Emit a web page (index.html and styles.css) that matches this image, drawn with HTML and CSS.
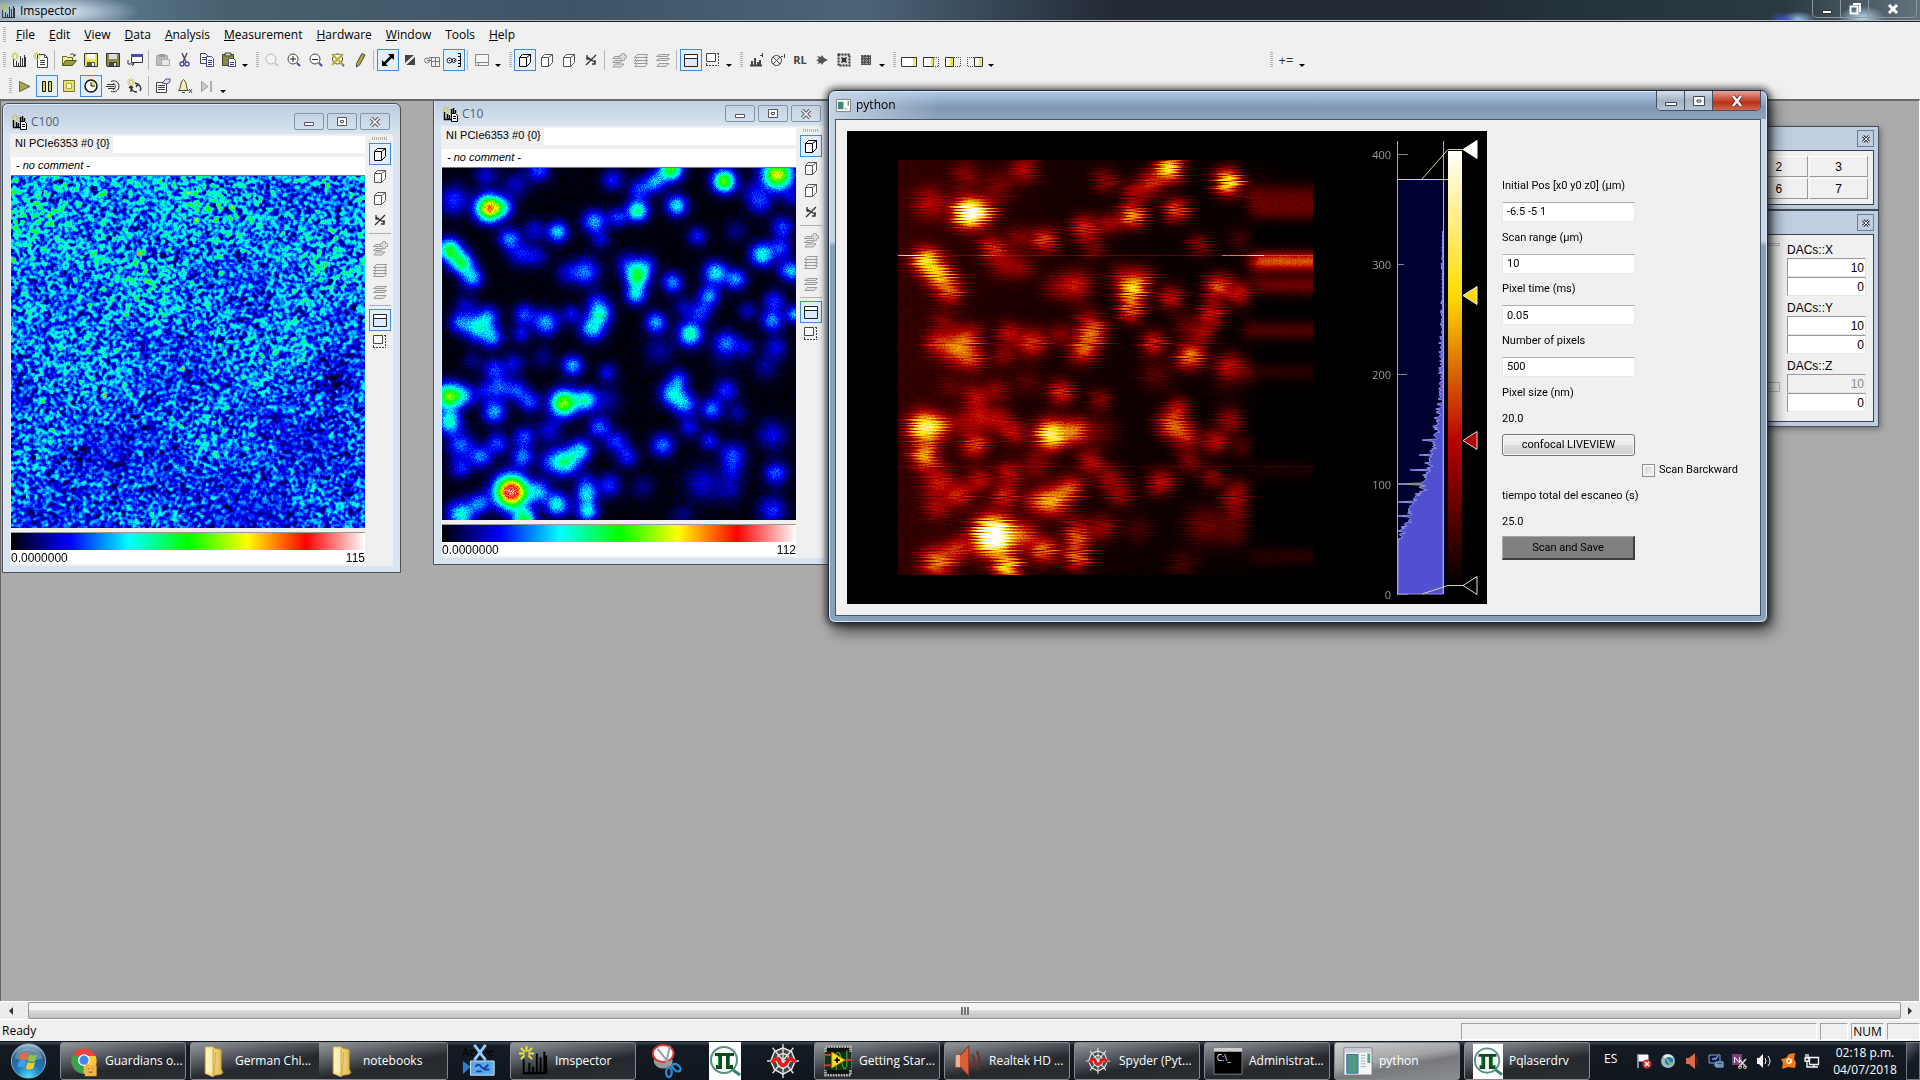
FILE: index.html
```html
<!DOCTYPE html>
<html lang="en">
<head>
<meta charset="utf-8">
<title>Imspector</title>
<link rel="stylesheet" href="styles.css">
</head>
<body>
<svg class="defs" aria-hidden="true">
<defs>
<linearGradient id="g-gold" x1="0" x2="1"><stop offset="0" stop-color="#fff3b0"/><stop offset="1" stop-color="#e0b64a"/></linearGradient>
<linearGradient id="g-thermal" x1="0" y1="1" x2="0" y2="0"><stop offset="0" stop-color="#000"/><stop offset=".3333" stop-color="#b90000"/><stop offset=".6666" stop-color="#ffdc00"/><stop offset="1" stop-color="#fff"/></linearGradient>
<radialGradient id="g-orb" cx=".5" cy=".95" r=".95"><stop offset="0" stop-color="#4fe0ff"/><stop offset=".4" stop-color="#1b78b8"/><stop offset=".75" stop-color="#2c5f88"/><stop offset="1" stop-color="#b9cfe0"/></radialGradient>
</defs>
<symbol id="star" viewBox="0 0 16 16"><path d="M4 0v3M4 6v2M0 4h3M5 4h3M1 1l2 2M5 5l2 2M7 1L5 3M3 5L1 7" stroke="#c5c02c" fill="none"/></symbol>
<symbol id="new" viewBox="0 0 16 16"><path d="M2.500 7v7.500H15M5.500 14V9M7.500 14v-3M9.500 14V4M11.500 14V6M13.500 14V3M14.500 14V5" stroke="#333" fill="none"/><use href="#star" width="16" height="16"/></symbol>
<symbol id="child" viewBox="0 0 16 16"><path d="M2.500 6v7.500H9M5.500 13V8M7.500 13V9M9.500 8V3M11.500 7V2M13.500 7V4" stroke="#000" stroke-width="1.500" fill="none"/><path d="M9.500 7.500h4l2 2v6h-6z" fill="#fff" stroke="#000"/><path d="M11 10.500h3M11 12.500h3" stroke="#000"/><use href="#star" width="16" height="16"/></symbol>
<symbol id="newdoc" viewBox="0 0 16 16"><path d="M4.500 2.500h7l3 3v10h-10z" fill="#fff" stroke="#444"/><path d="M11.500 2.500v3h3M7 8.500h5M7 10.500h5M7 12.500h5" stroke="#444" fill="none"/><use href="#star" width="16" height="16"/></symbol>
<symbol id="open" viewBox="0 0 16 16"><path d="M1.500 13V4.500h4l1 1h5v3" fill="#f2ee9a" stroke="#66661a"/><path d="M1.500 13.500l3-5h11l-4 5z" fill="#9a9a3c" stroke="#55551a"/><path d="M9 3c2-2 4-1 5 1m0-2v2h-2" stroke="#333" fill="none"/></symbol>
<symbol id="save" viewBox="0 0 16 16"><path d="M1.500 1.500h13v13h-12l-1-1z" fill="#e6e25a" stroke="#333"/><path d="M4 2h8v5H4z" fill="#fff"/><path d="M4 10h8v4H4z" fill="#555"/><path d="M9 11h2v3H9z" fill="#fff"/></symbol>
<symbol id="saveas" viewBox="0 0 16 16"><path d="M1.500 1.500h13v13h-12l-1-1z" fill="#8b8b45" stroke="#333"/><path d="M4 2h8v5H4z" fill="#ddd"/><path d="M4 10h8v4H4z" fill="#444"/><path d="M9 11h2v3H9z" fill="#ddd"/></symbol>
<symbol id="win" viewBox="0 0 16 16"><path d="M4.500 2.500h11v8h-11z" fill="#fff" stroke="#333"/><path d="M4 2h12v3H4z" fill="#4a4aa5"/><path d="M1 8v4h6M5 10l2 2-2 2" stroke="#333" fill="none"/></symbol>
<symbol id="clip" viewBox="0 0 16 16"><path d="M1.500 3.500h11v10h-11z" fill="#bbb" stroke="#aaa"/><path d="M4 2h6v3H4z" fill="#999"/><path d="M6.500 7.500h8v6h-8z" fill="#e8e8e8" stroke="#aaa"/></symbol>
<symbol id="cut" viewBox="0 0 16 16"><path d="M5 1l4 9M10 1L6 10" stroke="#444" stroke-width="1.300" fill="none"/><circle cx="5" cy="12" r="2" fill="none" stroke="#4646a8" stroke-width="1.300"/><circle cx="10" cy="12" r="2" fill="none" stroke="#4646a8" stroke-width="1.300"/></symbol>
<symbol id="copy" viewBox="0 0 16 16"><path d="M1.500 1.500h5l2 2v8h-7z" fill="#fff" stroke="#444"/><path d="M3 5.500h4M3 7.500h4" stroke="#444"/><path d="M7.500 4.500h5l2 2v8h-7z" fill="#fff" stroke="#4646a8"/><path d="M9 8.500h4M9 10.500h4M9 12.500h4" stroke="#4646a8"/></symbol>
<symbol id="paste" viewBox="0 0 16 16"><path d="M1.500 2.500h11v11h-11z" fill="#8b8b3a" stroke="#44441a"/><path d="M4 1h6v3H4z" fill="#ccc" stroke="#444"/><path d="M7.500 6.500h5l2 2v6h-7z" fill="#fff" stroke="#4646a8"/><path d="M9 10.500h4M9 12.500h4" stroke="#4646a8"/></symbol>
<symbol id="lens" viewBox="0 0 16 16"><circle cx="7" cy="7" r="5" fill="#f4f4f4" stroke="currentColor"/><path d="M11 11l3 3" stroke="currentColor" stroke-width="1.500"/></symbol>
<symbol id="zin" viewBox="0 0 16 16"><path d="M11 11l3 3" stroke="#4646a8" stroke-width="2"/><circle cx="7" cy="7" r="5" fill="#fff" stroke="#444"/><path d="M4 7h6M7 4v6" stroke="#222"/></symbol>
<symbol id="zout" viewBox="0 0 16 16"><path d="M11 11l3 3" stroke="#4646a8" stroke-width="2"/><circle cx="7" cy="7" r="5" fill="#fff" stroke="#444"/><path d="M4 7.500h6" stroke="#222"/></symbol>
<symbol id="zx" viewBox="0 0 16 16"><path d="M11 11l3 3" stroke="#4646a8" stroke-width="2"/><circle cx="7.500" cy="7" r="5" fill="#fff" stroke="#444"/><path d="M2 2l11 11M13 2L2 13" stroke="#b8b12a" stroke-width="2"/></symbol>
<symbol id="pen" viewBox="0 0 16 16"><path d="M10 1.500l3 1.500-5.500 10-3 2 0-3.500z" fill="#b0ac3a" stroke="#444"/></symbol>
<symbol id="arrows" viewBox="0 0 16 16"><path d="M4 12L12 4" stroke="#000" stroke-width="2.500"/><path d="M8 2h6v6zM2 8v6h6z"/></symbol>
<symbol id="diag" viewBox="0 0 16 16"><path d="M3 3h9L3 11z" fill="#444"/><path d="M13 5v8H4z" fill="#444"/><path d="M4 12l8-8" stroke="#eee" stroke-width="1.500"/></symbol>
<symbol id="link" viewBox="0 0 16 16"><path d="M7.500 5.500h8v9h-8zM7.500 9.500h8M11.500 5.500v9" fill="none" stroke="#777"/><circle cx="3" cy="8.500" r="2.500" fill="none" stroke="#777"/><path d="M3 8.500h4M5 5.500h3" stroke="#777"/></symbol>
<symbol id="linkb" viewBox="0 0 16 16"><circle cx="3.500" cy="8.500" r="2.500" fill="none" stroke="#222"/><circle cx="8" cy="8.500" r="2" fill="none" stroke="#222"/><path d="M3 8.500h1M8 8.500h1M12 1.500h2.500v13H12M12 4.500h2M12 8.500h2M12 11.500h2" fill="none" stroke="#000"/></symbol>
<symbol id="pane" viewBox="0 0 16 16"><path d="M1.500 2.500h13v11h-13zM1.500 10.500h13M4.500 10v3" fill="#f4f4f4" stroke="#888"/></symbol>
<symbol id="cube" viewBox="0 0 16 16"><path d="M2.500 5.500h7v9h-7zM2.500 5.500l3-3h8v8l-4 4M9.500 5.500l4-3" fill="#fff" stroke="currentColor"/></symbol>
<symbol id="axes" viewBox="0 0 16 16"><path d="M3 13L13 3M4 5l9 6M4 3v4h3M12 8v4h-3" fill="none" stroke="#333" stroke-width="1.300"/></symbol>
<symbol id="lay1" viewBox="0 0 16 16"><path d="M3.500 4.500h8l-2 2h-8zM3.500 8.500h8l-2 2h-8zM4 12h9l-3 3H2z" fill="#e4e4e4" stroke="#999"/><path d="M10.500 1.500h3v2h2v3h-2v2h-3v-2h-2v-3h2z" fill="#ddd" stroke="#aaa"/></symbol>
<symbol id="lay2" viewBox="0 0 16 16"><path d="M4.500 2.500h10l-2 3h-11zM4.500 5.500h10l-2 3h-11zM4.500 8.500h10l-2 3h-11zM4.500 11.500h10l-2 3h-11z" fill="#eee" stroke="#999"/></symbol>
<symbol id="lay3" viewBox="0 0 16 16"><path d="M4.500 2.500h10l-2 2h-11zM4.500 6.500h10l-2 2h-11zM4 11.500h10l-3 3H2z" fill="#e4e4e4" stroke="#999"/></symbol>
<symbol id="frame" viewBox="0 0 16 16"><path d="M1.500 2.500h13v12h-13z" fill="#dcebfa" stroke="#222"/><path d="M2 3h12v3H2z" fill="#fff"/><path d="M1 6.500h13" stroke="#222"/></symbol>
<symbol id="dash" viewBox="0 0 16 16"><path d="M1.500 1.500h9v8h-9z" fill="#fff" stroke="#444"/><path d="M13.500 1v13M1 13.500h13M1.500 11v3M12 1.500h2" stroke="#444" stroke-dasharray="2 1" fill="none"/></symbol>
<symbol id="chart" viewBox="0 0 16 16"><path d="M2 13.500h12M4 13V9M7 13V6M10 13v-3M12 13V8" stroke="#444" stroke-width="2"/><path d="M12 3.500h2M14.500 1v4" stroke="#444"/></symbol>
<symbol id="circx" viewBox="0 0 16 16"><circle cx="6.500" cy="8.500" r="5" fill="none" stroke="#444"/><path d="M3 5l7 7M10 5l-7 7M11 4.500h2M14.500 2v4" stroke="#444"/></symbol>
<symbol id="burst" viewBox="0 0 16 16"><path d="M3 4l4 1 1-2 2 3 4 2-4 2-2 3-1-2-4 1 2-2-3-2 3-1z" fill="#555"/></symbol>
<symbol id="fburst" viewBox="0 0 16 16"><path d="M2.500 2.500h11v11h-11z" fill="#ddd" stroke="#333" stroke-width="2" stroke-dasharray="2 1"/><path d="M5 5l3 1 3-1-1 3 1 3-3-1-3 1 1-3z" fill="#333"/></symbol>
<symbol id="grid" viewBox="0 0 16 16"><path d="M3 3h10v10H3z" fill="#555"/><path d="M5.500 3v10M8.500 3v10M11.500 3v10M3 5.500h10M3 8.500h10M3 11.500h10" stroke="#999" stroke-dasharray="1 1"/></symbol>
<symbol id="box1" viewBox="0 0 16 16"><path d="M.5 5.500h15v9H.5z" fill="#fff" stroke="#333"/><path d="M12 6h2.500v8H12z" fill="#ece64a"/></symbol>
<symbol id="box2" viewBox="0 0 16 16"><path d="M.5 5.500h10v9H.5z" fill="#fff" stroke="#333"/><path d="M8 6h2.500v8H8z" fill="#ece64a"/><path d="M11 5.500h4.500v9H11" fill="none" stroke="#444" stroke-dasharray="1 1"/></symbol>
<symbol id="box3" viewBox="0 0 16 16"><path d="M.5 5.500h8v9H.5z" fill="#fff" stroke="#333"/><path d="M5 6h3v8H5z" fill="#ece64a"/><path d="M9 5.500h6.500v9H9" fill="none" stroke="#444" stroke-dasharray="1 1"/></symbol>
<symbol id="box4" viewBox="0 0 16 16"><path d="M7.500 5.500h8v9h-8z" fill="#fff" stroke="#333"/><path d="M12 6h2.500v8H12z" fill="#ece64a"/><path d="M7 5.500H.5v9H7" fill="none" stroke="#444" stroke-dasharray="1 1"/></symbol>
<symbol id="play" viewBox="0 0 16 16"><path d="M2.500 3.500v10L13 8.500z" fill="#aaa64a" stroke="#66663a"/></symbol>
<symbol id="pause" viewBox="0 0 16 16"><path d="M3.500 3.500h3v10h-3zM9.500 3.500h3v10h-3z" fill="#d8d33a" stroke="#111"/></symbol>
<symbol id="stop" viewBox="0 0 16 16"><path d="M2.500 2.500h11v11h-11z" fill="#e8e26a" stroke="#77773a"/><path d="M5.500 5.500h5v5h-5z" fill="#fafad8" stroke="#aaa64a"/></symbol>
<symbol id="clock" viewBox="0 0 16 16"><circle cx="8" cy="8" r="6" fill="#fff" stroke="#111" stroke-width="1.500"/><path d="M8.500 3v4.500H12A4 4 0 0 0 8.500 3z" fill="#e8e26a"/><path d="M8 4v4h4" fill="none" stroke="#111"/></symbol>
<symbol id="loop" viewBox="0 0 16 16"><path d="M6 3.500c5-2 8 1 8 5s-4 6-8 5M2 6.500h7M1 8.500h8M3 10.500h7" fill="none" stroke="#333"/><path d="M8 5.500c3 0 3 6 0 6" fill="none" stroke="#333"/></symbol>
<symbol id="redo" viewBox="0 0 16 16"><path d="M4 8c0 5 4 6 6 6M13 13c2-3 0-6-3-7M4 14V9M2 10l2-2 2 2M8 5l3 1-2 3" fill="none" stroke="#333" stroke-width="1.400"/><use href="#star" width="16" height="16"/></symbol>
<symbol id="prop" viewBox="0 0 16 16"><path d="M1.500 4.500h10v10h-10z" fill="#fff" stroke="#444"/><path d="M3 7.500h7M3 9.500h7M3 11.500h7" stroke="#444"/><path d="M7 5l4-4h4v3l-3 2z" fill="#ddd" stroke="#4646a8"/></symbol>
<symbol id="bell" viewBox="0 0 16 16"><path d="M1.500 12.500c3-2 1-8 5-11 4 3 2 9 5 11z" fill="#f6f1a8" stroke="#444"/><path d="M5 14.500h3M12 11l3 4M15 11l-3 4" stroke="#444"/></symbol>
<symbol id="end" viewBox="0 0 16 16"><path d="M2.500 3.500v10L9 8.500z" fill="#ccc" stroke="#999"/><path d="M12 3v11" stroke="#999" stroke-width="1.500"/></symbol>
<symbol id="folder" viewBox="0 0 24 36"><path d="M2 2h9l2 2 7 1v22l2 4-2 2-7 1-2 2-9-4z" fill="url(#g-gold)" stroke="#c39b38"/><path d="M11 4v30M14 8l-2 26" stroke="#c9a347" fill="none"/><path d="M4 4h6v26H4z" fill="#fff" opacity=".35"/></symbol>
<symbol id="spider" viewBox="0 0 36 36"><path d="M18 4l9 4 4 10-4 9-9 5-9-5-4-9 4-10z" fill="#444"/><path d="M18 4l9 4 4 10-4 9-9 5-9-5-4-9 4-10zM18 10l5 2 2 6-2 5-5 3-5-3-2-5 2-6z" fill="none" stroke="#eee" stroke-width="1.500"/><path d="M18 0v36M1 18h34M7 4l22 27M29 4L7 31" stroke="#ddd" stroke-width="1.500"/><path d="M6 20c4-6 7-5 9 0s6 2 8-2 5-2 8 1" stroke="#e31b1b" stroke-width="4" fill="none"/></symbol>
<symbol id="pq" viewBox="0 0 32 38"><path d="M0 0h32v38H0z" fill="#fff"/><circle cx="15" cy="18" r="13" fill="#f4faf8" stroke="#5a8f88" stroke-width="2"/><path d="M6 12.500h19" stroke="#0d4a1c" stroke-width="3"/><path d="M11 13v12H7M19 13v12h5" stroke="#0d4a1c" stroke-width="4" fill="none"/><path d="M9.500 15v9M20.500 15v9" stroke="#1ea34a"/><path d="M24 28l7 5" stroke="#2c8576" stroke-width="3"/></symbol>
<symbol id="speaker" viewBox="0 0 32 36"><path d="M2 11h6L17 1v34L8 25H2z" fill="#d96038" stroke="#7d2813"/><path d="M2 11h5v14H2z" fill="#f3b08d"/><path d="M21 11q4 7 0 14M26 7q6 11 0 22" stroke="#7c2a18" stroke-width="2" fill="none"/></symbol>
</svg>

<header class="titlebar">
  <svg class="i16"><use href="#new"/></svg><span class="titlebar-text">Imspector</span>
  <div class="caption">
    <button aria-label="Minimize"><svg viewBox="0 0 14 12"><path d="M2.500 7.500h9v3h-9z" fill="#fff" stroke="#333"/></svg></button>
    <button aria-label="Restore"><svg viewBox="0 0 14 12"><path d="M5 1h7v8M2.500 3.500h7v7h-7z" fill="none" stroke="#fff" stroke-width="2"/></svg></button>
    <button class="wide" aria-label="Close"><svg viewBox="0 0 14 12"><path d="M3 2l8 8M11 2l-8 8" stroke="#fff" stroke-width="3"/></svg></button>
  </div>
</header>

<nav class="menubar">
  <i class="grip"></i>
  <button><u>F</u>ile</button><button><u>E</u>dit</button><button><u>V</u>iew</button><button><u>D</u>ata</button><button><u>A</u>nalysis</button><button><u>M</u>easurement</button><button><u>H</u>ardware</button><button><u>W</u>indow</button><button>Tools</button><button><u>H</u>elp</button>
</nav>

<div class="toolbar">
  <i class="grip"></i>
  <button aria-label="New"><svg><use href="#new"/></svg></button><button aria-label="New document"><svg><use href="#newdoc"/></svg></button><i class="sep"></i>
  <button aria-label="Open"><svg><use href="#open"/></svg></button><button aria-label="Save"><svg><use href="#save"/></svg></button><button aria-label="Save as"><svg><use href="#saveas"/></svg></button><button aria-label="Window"><svg><use href="#win"/></svg></button><i class="sep"></i>
  <button aria-label="Clipboard"><svg><use href="#clip"/></svg></button><button aria-label="Cut"><svg><use href="#cut"/></svg></button><button aria-label="Copy"><svg><use href="#copy"/></svg></button><button aria-label="Paste"><svg><use href="#paste"/></svg></button><i class="more"></i>
  <i class="grip"></i>
  <button class="off" aria-label="Zoom"><svg><use href="#lens"/></svg></button><button aria-label="Zoom in"><svg><use href="#zin"/></svg></button><button aria-label="Zoom out"><svg><use href="#zout"/></svg></button><button aria-label="Reset zoom"><svg><use href="#zx"/></svg></button><button aria-label="Draw"><svg><use href="#pen"/></svg></button><i class="sep"></i>
  <button class="on" aria-label="Stretch"><svg><use href="#arrows"/></svg></button><button aria-label="Shrink"><svg><use href="#diag"/></svg></button><button aria-label="Link"><svg><use href="#link"/></svg></button><button class="on" aria-label="Link range"><svg><use href="#linkb"/></svg></button><i class="sep"></i>
  <button aria-label="Pane"><svg><use href="#pane"/></svg></button><i class="more"></i>
  <i class="grip"></i>
  <button class="on" aria-label="XY view"><svg><use href="#cube"/></svg></button><button aria-label="XZ view"><svg><use href="#cube"/></svg></button><button aria-label="YZ view"><svg><use href="#cube"/></svg></button><button aria-label="Axes"><svg><use href="#axes"/></svg></button><i class="sep"></i>
  <button aria-label="Add layer"><svg><use href="#lay1"/></svg></button><button aria-label="Layers"><svg><use href="#lay2"/></svg></button><button aria-label="Merge layers"><svg><use href="#lay3"/></svg></button><i class="sep"></i>
  <button class="on" aria-label="Frame"><svg><use href="#frame"/></svg></button><button aria-label="Region"><svg><use href="#dash"/></svg></button><i class="more"></i>
  <i class="grip"></i>
  <button aria-label="Inverse chart"><svg><use href="#chart"/></svg></button><button aria-label="Inverse filter"><svg><use href="#circx"/></svg></button><button class="rl">RL</button><button aria-label="Spot"><svg><use href="#burst"/></svg></button><button aria-label="Framed spot"><svg><use href="#fburst"/></svg></button><button aria-label="Grid"><svg><use href="#grid"/></svg></button><i class="more"></i>
  <i class="grip"></i>
  <button aria-label="Range 1"><svg><use href="#box1"/></svg></button><button aria-label="Range 2"><svg><use href="#box2"/></svg></button><button aria-label="Range 3"><svg><use href="#box3"/></svg></button><button aria-label="Range 4"><svg><use href="#box4"/></svg></button><i class="more"></i>
  <span class="toolbar-gap"></span>
  <i class="grip"></i><button class="plus">+=</button><i class="more"></i>
</div>
<div class="toolbar second">
  <i class="grip"></i>
  <button aria-label="Start"><svg><use href="#play"/></svg></button><button class="on" aria-label="Pause"><svg><use href="#pause"/></svg></button><button aria-label="Stop"><svg><use href="#stop"/></svg></button><button class="on" aria-label="Timer"><svg><use href="#clock"/></svg></button><button aria-label="Loop"><svg><use href="#loop"/></svg></button><button aria-label="Repeat"><svg><use href="#redo"/></svg></button><i class="sep"></i>
  <button aria-label="Properties"><svg><use href="#prop"/></svg></button><button aria-label="Alarm"><svg><use href="#bell"/></svg></button><button aria-label="Skip to end"><svg><use href="#end"/></svg></button><i class="more"></i>
</div>

<main class="workspace">
  <section class="child c100">
    <header class="child-title"><svg class="i16"><use href="#child"/></svg><span>C100</span>
      <div class="child-caption"><button aria-label="Minimize"><svg viewBox="0 0 14 12"><path d="M2.500 6.500h9v3h-9z" fill="#fff" stroke="#556"/></svg></button><button aria-label="Maximize"><svg viewBox="0 0 14 12"><path d="M2.500 1.500h9v8h-9zM5.500 4.500h3v2h-3z" fill="#fff" stroke="#556"/></svg></button><button aria-label="Close"><svg viewBox="0 0 14 12"><path d="M3 2l8 8M11 2l-8 8" stroke="#556" stroke-width="3.500"/><path d="M3 2l8 8M11 2l-8 8" stroke="#fff" stroke-width="1.500"/></svg></button></div>
    </header>
    <div class="child-body">
      <div class="view">
        <div class="source"><span>NI PCIe6353 #0 {0}</span></div>
        <div class="comment">- no comment -</div>
        <canvas id="scan-coarse" width="354" height="352"></canvas>
        <div class="ramp"></div>
        <div class="limits"><span>0.0000000</span><span>115</span></div>
      </div>
      <div class="side">
        <i class="hgrip"></i><button class="on" aria-label="XY view"><svg><use href="#cube"/></svg></button><button aria-label="XZ view"><svg><use href="#cube"/></svg></button><button aria-label="YZ view"><svg><use href="#cube"/></svg></button><button aria-label="Axes"><svg><use href="#axes"/></svg></button><i class="hsep"></i><button aria-label="Add layer"><svg><use href="#lay1"/></svg></button><button aria-label="Layers"><svg><use href="#lay2"/></svg></button><button aria-label="Merge layers"><svg><use href="#lay3"/></svg></button><i class="hsep"></i><button class="on" aria-label="Frame"><svg><use href="#frame"/></svg></button><button aria-label="Region"><svg><use href="#dash"/></svg></button>
      </div>
    </div>
  </section>

  <section class="child c10">
    <header class="child-title"><svg class="i16"><use href="#child"/></svg><span>C10</span>
      <div class="child-caption"><button aria-label="Minimize"><svg viewBox="0 0 14 12"><path d="M2.500 6.500h9v3h-9z" fill="#fff" stroke="#556"/></svg></button><button aria-label="Maximize"><svg viewBox="0 0 14 12"><path d="M2.500 1.500h9v8h-9zM5.500 4.500h3v2h-3z" fill="#fff" stroke="#556"/></svg></button><button aria-label="Close"><svg viewBox="0 0 14 12"><path d="M3 2l8 8M11 2l-8 8" stroke="#556" stroke-width="3.500"/><path d="M3 2l8 8M11 2l-8 8" stroke="#fff" stroke-width="1.500"/></svg></button></div>
    </header>
    <div class="child-body">
      <div class="view">
        <div class="source"><span>NI PCIe6353 #0 {0}</span></div>
        <div class="comment">- no comment -</div>
        <canvas id="scan-fine" width="354" height="352"></canvas>
        <div class="ramp"></div>
        <div class="limits"><span>0.0000000</span><span>112</span></div>
      </div>
      <div class="side">
        <i class="hgrip"></i><button class="on" aria-label="XY view"><svg><use href="#cube"/></svg></button><button aria-label="XZ view"><svg><use href="#cube"/></svg></button><button aria-label="YZ view"><svg><use href="#cube"/></svg></button><button aria-label="Axes"><svg><use href="#axes"/></svg></button><i class="hsep"></i><button aria-label="Add layer"><svg><use href="#lay1"/></svg></button><button aria-label="Layers"><svg><use href="#lay2"/></svg></button><button aria-label="Merge layers"><svg><use href="#lay3"/></svg></button><i class="hsep"></i><button class="on" aria-label="Frame"><svg><use href="#frame"/></svg></button><button aria-label="Region"><svg><use href="#dash"/></svg></button>
      </div>
    </div>
  </section>

  <section class="dock dock-a">
    <header><button aria-label="Close"><svg viewBox="0 0 10 10"><path d="M2 2l6 6M8 2l-6 6" stroke="#445" stroke-width="3"/><path d="M2 2l6 6M8 2l-6 6" stroke="#fff"/></svg></button></header>
    <div class="dock-body pads"><button>0</button><button>1</button><button>2</button><button>3</button><button>4</button><button>5</button><button>6</button><button>7</button></div>
  </section>
  <section class="dock dock-b">
    <header><button aria-label="Close"><svg viewBox="0 0 10 10"><path d="M2 2l6 6M8 2l-6 6" stroke="#445" stroke-width="3"/><path d="M2 2l6 6M8 2l-6 6" stroke="#fff"/></svg></button></header>
    <div class="dock-body dacs">
      <div class="tracks"><i></i><i></i></div>
      <div class="dac-list">
        <div class="dac"><label for="dx">DACs::X</label><input id="dx" value="10"><input aria-label="X offset" value="0"></div>
        <div class="dac"><label for="dy">DACs::Y</label><input id="dy" value="10"><input aria-label="Y offset" value="0"></div>
        <div class="dac"><label for="dz">DACs::Z</label><input id="dz" value="10" disabled><input aria-label="Z offset" value="0"></div>
      </div>
    </div>
  </section>
</main>

<div class="hscroll"><button aria-label="Scroll left"><svg viewBox="0 0 8 8"><path d="M6 0v8L2 4z" fill="#333"/></svg></button><div class="thumb"><i></i><i></i><i></i></div><button aria-label="Scroll right"><svg viewBox="0 0 8 8"><path d="M2 0v8l4-4z" fill="#333"/></svg></button></div>
<div class="status"><span class="ready">Ready</span><span class="cell c-long"></span><span class="cell c-small"></span><span class="cell c-num">NUM</span><span class="cell c-num"></span></div>

<footer class="taskbar">
  <button class="orb" aria-label="Start"><svg viewBox="0 0 40 40"><circle cx="20" cy="20" r="18" fill="url(#g-orb)" stroke="#8fb4cc"/><path d="M5 17a15.500 14 0 0 1 30 0q-15 5-30 0z" fill="#fff" opacity=".25"/><path d="M12 12q4-2 8 0l-2 7q-4-2-8 0z" fill="#ee6a30"/><path d="M21 13q4 2 8 0l-2 7q-4 2-8 0z" fill="#8cc540"/><path d="M10 20q4-2 8 0l-2 7q-4-2-8 0z" fill="#3fa2e6"/><path d="M19 21q4 2 8 0l-2 7q-4 2-8 0z" fill="#fbc62c"/></svg></button>
  <button class="task"><svg class="ico" viewBox="0 0 32 38"><circle cx="16" cy="19" r="15" fill="#e8453c"/><path d="M3 12a15 15 0 0 0 12 22l6-11-5-8z" fill="#36a350"/><path d="M16 13h13.700a15 15 0 0 1-14 21z" fill="#fbcb3b"/><circle cx="16" cy="18" r="7" fill="#fff"/><circle cx="16" cy="18" r="5.500" fill="#4486f4"/><path d="M17 37V25l3-4 3 3h3l3-3 2 4v12z" fill="#f1b544"/><path d="M21 28h1M26 28h1M22 32q2 1 4 0" stroke="#723" fill="none"/></svg><span>Guardians o...</span></button>
  <div class="group"><button class="task"><svg class="ico"><use href="#folder"/></svg><span>German Chi...</span></button><button class="task"><svg class="ico"><use href="#folder"/></svg><span>notebooks</span></button></div>
  <button class="pin" aria-label="Active camera"><svg viewBox="0 0 36 38"><text x="0" y="14" font-size="12" fill="#000">Active</text><path d="M13 2l12 16M25 2L13 18" stroke="#8fd0ff" stroke-width="3"/><path d="M1 19l8 6-8 8z" fill="#2b7fd4"/><path d="M9 19h25v15H9z" fill="#58a8ea" stroke="#d8ecff"/><path d="M14 25q4-4 6 0t8-2M15 30h6M23 28h6" stroke="#1a3fa8" stroke-width="2" fill="none"/></svg></button>
  <button class="task"><svg class="ico" viewBox="0 0 16 16"><path d="M2.500 7v7.500H15M5.500 14V9M7.500 14v-3M9.500 14V4M11.500 14V6M13.500 14V3M14.500 14V5" stroke="#000" fill="none"/><path d="M4 0v3M0 4h3M5 4h3M1 1l2 2M5 5l2 2M7 1L5 3M3 5L1 7" stroke="#efe93a" fill="none"/></svg><span>Imspector</span></button>
  <button class="pin" aria-label="Snipping Tool"><svg viewBox="0 0 36 38"><ellipse cx="14" cy="19" rx="10" ry="8" fill="#999"/><ellipse cx="14" cy="11" rx="11" ry="9" fill="#f7f7f7" stroke="#d33" stroke-width="2"/><path d="M8 6l16 20M21 3l-5 23" stroke="#99a" stroke-width="2"/><ellipse cx="20" cy="31" rx="3" ry="5" fill="none" stroke="#2789d8" stroke-width="2.500"/><ellipse cx="28" cy="26" rx="3" ry="5" fill="none" stroke="#2789d8" stroke-width="2.500" transform="rotate(-50 28 26)"/></svg></button>
  <button class="pin" aria-label="Pqlaserdrv"><svg><use href="#pq"/></svg></button>
  <button class="pin" aria-label="Spyder"><svg><use href="#spider"/></svg></button>
  <button class="task"><svg class="ico" viewBox="0 0 32 36"><path d="M2 2h28v32H2z" fill="#111" stroke="#bbb" stroke-width="3" stroke-dasharray="2 1"/><path d="M1 8h30v20H1z" fill="#163018"/><path d="M14 28V10q4-6 6 8t6 6V6" stroke="#4fcf5a" fill="none"/><path d="M1 11h7M1 23h7M24 17h8" stroke="#e33" stroke-width="2"/><path d="M9 8l15 9-15 9z" fill="#ffe21a" stroke="#a80"/><path d="M12 17h6M15 14v6" stroke="#000" stroke-width="2"/></svg><span>Getting Star...</span></button>
  <button class="task"><svg class="ico"><use href="#speaker"/></svg><span>Realtek HD ...</span></button>
  <button class="task"><svg class="ico small"><use href="#spider"/></svg><span>Spyder (Pyt...</span></button>
  <button class="task"><svg class="ico" viewBox="0 0 32 32"><path d="M1 3h30v27H1z" fill="#000" stroke="#888"/><path d="M1 2h30v4H1z" fill="#ccc"/><text x="4" y="16" font-size="9" fill="#fff">C:\_</text></svg><span>Administrat...</span></button>
  <button class="task active"><svg class="ico" viewBox="0 0 32 32"><path d="M1 2h30v29H1z" fill="#f5f5f5" stroke="#777"/><path d="M2 3h28v4H2z" fill="#ccd"/><path d="M4 9h12v20H4z" fill="#4f9a86" stroke="#36a"/><path d="M19 10h5M19 13h5M19 16h5M19 19h5M19 22h5" stroke="#aaa"/><path d="M26 8h3v10h-3z" fill="#4a8"/></svg><span>python</span></button>
  <button class="task"><svg class="ico tall"><use href="#pq"/></svg><span>Pqlaserdrv</span></button>
  <div class="tray">
    <span class="lang">ES</span>
    <svg viewBox="0 0 16 16"><path d="M2 1v14M3 2h9v6H3z" stroke="#fff" fill="#fff"/><circle cx="11" cy="11" r="4.500" fill="#d3302c"/><path d="M9 9l4 4M13 9l-4 4" stroke="#fff" stroke-width="1.500"/></svg>
    <svg viewBox="0 0 16 16"><circle cx="8" cy="8" r="7" fill="#9fb6c4"/><path d="M3 3a7 7 0 0 1 10 1L8 9z" fill="#e4eef4"/><circle cx="9" cy="8" r="4" fill="#2874b8"/><path d="M7 6l3 5 3-1" fill="none" stroke="#7ec850" stroke-width="2"/></svg>
    <svg viewBox="0 0 16 16"><path d="M2 5h3l6-5v16l-6-5H2z" fill="#dd6a48"/><path d="M13 4v8" stroke="#7c2a18"/></svg>
    <svg viewBox="0 0 16 16"><path d="M1 2h11v8H1z" fill="#0a1a4a" stroke="#8ab"/><path d="M4 6h4l2-3M6 12h8M8 9h7v5H8z" stroke="#9cf" fill="#456"/></svg>
    <svg viewBox="0 0 16 16"><path d="M0 1h10v11H0z" fill="#80397b"/><path d="M2.500 10V4l5 6V4" stroke="#fff" fill="none"/><path d="M7 6l7 8M14 6l-7 8" stroke="#ddd" stroke-width="1.500"/><circle cx="8" cy="14" r="1.500" fill="none" stroke="#eaa"/><circle cx="13" cy="14" r="1.500" fill="none" stroke="#eaa"/></svg>
    <svg viewBox="0 0 16 16"><path d="M1 5h2l4-4v14l-4-4H1z" fill="#fff"/><path d="M9 5q2 3 0 6M12 3q4 5 0 10" stroke="#fff" fill="none"/></svg>
    <svg viewBox="0 0 16 16"><path d="M1 6l5-1 3-4 6-1-1 6 2 4-1 5-7-1-6 2 1-6z" fill="#f47b14"/><path d="M10 6q-3-1-3 2t3 2q1-1 1-4v4" fill="none" stroke="#fff" stroke-width="1.500"/></svg>
    <svg viewBox="0 0 16 16"><path d="M5.500 4.500h9v7h-9zM6 14h8M10 12v2M2 1v4M4 1v4M1 5h4v3H1zM3 8v6h3" stroke="#fff" fill="none" stroke-width="1.300"/></svg>
    <div class="time"><span>02:18 p.m.</span><span>04/07/2018</span></div>
    <button class="desk" aria-label="Show desktop"></button>
  </div>
</footer>

<section class="python">
  <header class="py-title">
    <svg class="i16" viewBox="0 0 16 16"><path d="M.5 1.500h15v13H.5z" fill="#fff" stroke="#777"/><path d="M2 4h6v8H2z" fill="#3f8a7a"/><path d="M13 3v5" stroke="#355"/><path d="M9 10h3v3H9z" fill="#ccc"/></svg><span>python</span>
    <div class="caption light">
      <button aria-label="Minimize"><svg viewBox="0 0 14 12"><path d="M1.500 7.500h11v3h-11z" fill="#fff" stroke="#445"/></svg></button>
      <button aria-label="Maximize"><svg viewBox="0 0 14 12"><path d="M1.500 1.500h11v9h-11zM5 5h4v2H5z" fill="#fff" stroke="#445"/></svg></button>
      <button class="wide close" aria-label="Close"><svg viewBox="0 0 14 12"><path d="M3 1l8 10M11 1L3 11" stroke="#622" stroke-width="4"/><path d="M3 1l8 10M11 1L3 11" stroke="#fff" stroke-width="2.500"/></svg></button>
    </div>
  </header>
  <div class="py-body">
    <div class="plot">
      <canvas id="scan-live" width="415" height="415"></canvas>
      <svg class="hist" viewBox="0 0 120 473" width="120" height="473">
        <path d="M31 48h48v415H31z" fill="#000033"/>
        <path id="hist-fill" d="" fill="#5050d0" stroke="#9090e8"/>
        <path d="M30.500 10v453M76.500 10v453" stroke="#aab" fill="none"/>
        <path d="M30 23.500h11M30 133.500h7M30 243.500h10M30 353.500h26M30 463.500h11" stroke="#889"/>
        <g class="ticks"><text x="24" y="28">400</text><text x="24" y="138">300</text><text x="24" y="248">200</text><text x="24" y="358">100</text><text x="24" y="468">0</text></g>
        <path d="M81 20h14v434H81z" fill="url(#g-thermal)"/>
        <path d="M31 48.500h50M55 48l26-29.500h15M55 463l26-8.500h15" stroke="#d5d59a" fill="none"/>
        <path d="M96 18.500l14-9v18z" fill="#fff" stroke="#fff"/><path d="M96 164.500l14-9v18z" fill="#ffdc00" stroke="#eee"/><path d="M96 309.500l14-9v18z" fill="#b90000" stroke="#ddd"/><path d="M96 454.500l14-9v18z" fill="#000" stroke="#ddd"/>
      </svg>
    </div>
    <form class="scan-form">
      <label for="pos">Initial Pos [x0 y0 z0] (µm)</label><input id="pos" value="-6.5 -5 1">
      <label for="range">Scan range (µm)</label><input id="range" value="10">
      <label for="ptime">Pixel time (ms)</label><input id="ptime" value="0.05">
      <label for="npix">Number of pixels</label><input id="npix" value="500">
      <span>Pixel size (nm)</span><span>20.0</span>
      <button type="button" class="live">confocal LIVEVIEW</button>
      <label class="check"><input type="checkbox">Scan Barckward</label>
      <span class="total">tiempo total del escaneo (s)</span><span class="total-value">25.0</span>
      <button type="button" class="go">Scan and Save</button>
    </form>
  </div>
</section>
<script src="scan.js"></script>
</body>
</html>
```

FILE: styles.css
```css
* { box-sizing: border-box; }
html, body { height: 100%; }
body {
  margin: 0;
  display: flex;
  flex-direction: column;
  overflow: hidden;
  position: relative;
  background: #f0f0f0;
  color: #000;
  font: 12px/16px "Open Sans", "Noto Sans", sans-serif;
  white-space: nowrap;
}
button, input { font: inherit; color: inherit; margin: 0; padding: 0; }
button { background: none; border: 0; }
canvas, svg { display: block; }
.defs { position: absolute; width: 0; height: 0; }
.i16 { width: 16px; height: 16px; flex: none; }

/* main title bar */
.titlebar {
  height: 22px;
  flex: none;
  display: flex;
  align-items: center;
  gap: 4px;
  border-bottom: 1px solid #1c2226;
  box-shadow: inset 0 -1px #b0bcc6;
  background: radial-gradient(ellipse 90px 18px at 50px 12px, #c4d5e4 30%, transparent),
    radial-gradient(ellipse 14px 9px at 1782px 20px, #3a50c0, transparent),
    radial-gradient(ellipse 18px 9px at 1798px 20px, #9cc4f0, transparent),
    radial-gradient(ellipse 24px 12px at 1862px 18px, #b8d8f0, transparent),
    linear-gradient(90deg, #6a8aa4, #47606f 12%, #3e5567 30%, #4c6478 45%, #232a35 58%, #222a34 76%, #25343c 82%, #2a3942 93%, #63727c);
}
.titlebar-text { flex: 1; }
.caption { display: flex; align-self: flex-start; margin-right: 3px; border: 1px solid #8a979f; border-top: 0; border-radius: 0 0 5px 5px; height: 18px; overflow: hidden; }
.caption button { width: 28px; display: grid; place-items: center; border-right: 1px solid #8a979f; }
.caption .wide { width: 47px; border-right: 0; }
.caption svg { width: 14px; height: 12px; }

/* menu and tool bars */
.menubar { height: 26px; flex: none; display: flex; align-items: center; gap: 14px; padding-right: 8px; }
.menubar .grip { margin-right: -6px; }
.grip { width: 8px; height: 16px; flex: none; background: repeating-linear-gradient(#b4b4b4 0 1px, #f0f0f0 1px 2px) 3px 0 / 3px 16px no-repeat; }
.toolbar { height: 24px; flex: none; display: flex; align-items: center; }
.toolbar.second { height: 27px; padding-left: 6px; }
.toolbar button, .side button { width: 22px; height: 22px; flex: none; display: grid; place-items: center; color: #555; }
.toolbar button svg, .side svg { width: 16px; height: 16px; }
.toolbar button.off { color: #bbb; }
.toolbar button.on, .side button.on { background: #e2effb; border: 1px solid #3c8dd8; color: #000; }
.sep { width: 6px; height: 20px; flex: none; background: linear-gradient(#b8b8b8, #b8b8b8) 2px 0 / 1px 20px no-repeat; }
.more { width: 13px; height: 22px; flex: none; display: grid; place-items: end start; padding: 0 0 4px 2px; }
.more::before { content: ""; border: 3px solid transparent; border-top-color: #000; border-bottom: 0; }
.toolbar .rl { font-size: 11px; font-weight: 700; color: #444; }
.toolbar .plus { font-size: 13px; color: #333; }
.toolbar-gap { width: 268px; flex: none; }

/* MDI area */
.workspace { flex: 1; position: relative; overflow: hidden; background: #ababab; border-top: 2px solid #696969; border-left: 1px solid #696969; border-right: 1px solid #fff; }
.child {
  position: absolute;
  width: 399px;
  padding: 0 7px 6px;
  border: 1px solid #4a5058;
  border-radius: 6px 6px 0 0;
  background: linear-gradient(#bccbdd, #d8e4f1 30px);
  box-shadow: inset 1px 1px #e4edf6;
}
.c100 { left: 1px; top: 2px; }
.c10 { left: 432px; top: -6px; }
.child-title { height: 30px; display: flex; align-items: center; gap: 4px; padding: 5px 3px 0 1px; color: #555f6b; }
.child-title span { flex: 1; }
.child-caption { display: flex; gap: 3px; }
.child-caption button { width: 30px; height: 17px; border: 1px solid #8494aa; border-radius: 2px; display: grid; place-items: center; }
.child-caption svg { width: 14px; height: 12px; }
.child-body { display: flex; gap: 4px; background: #f0f0f0; padding: 2px 2px 2px 1px; }
.view { width: 354px; font: 12px/14px "Liberation Sans", Arial, sans-serif; }
.source { background: #fff; height: 17px; display: flex; margin-bottom: 4px; }
.source span { width: 102px; background: #f0f0f0; padding: 0 0 0 4px; font-size: 11px; }
.comment { background: #fff; height: 18px; padding: 1px 5px; font-size: 11px; font-style: italic; }
.view canvas { width: 354px; height: 353px; border-top: 1px solid #777; }
.ramp { height: 18px; margin-top: 4px; border-top: 1px solid #999; background: linear-gradient(90deg, #000, #00f 16.670%, #0ff 33.330%, #0f0 50%, #ff0 66.670%, #f00 83.330%, #fff); }
.limits { display: flex; justify-content: space-between; background: #fff; height: 14px; line-height: 16px; }
.side { width: 22px; display: flex; flex-direction: column; align-items: center; }
.hgrip { width: 16px; height: 3px; margin: 1px 0 3px; background: repeating-linear-gradient(90deg, #b4b4b4 0 1px, #f0f0f0 1px 2px); }
.hsep { width: 22px; height: 1px; margin: 2px 0 3px; background: #b0b0b0; }

/* docked tool panels */
.dock { position: absolute; width: 260px; right: 40px; border: 1px solid #444e5a; background: #bfcfe1; padding: 0 4px 4px; box-shadow: 2px 2px 6px rgba(0, 0, 0, .35); font: 12px/16px "Liberation Sans", Arial, sans-serif; }
.dock-a { top: 25px; }
.dock-b { top: 109px; }
.dock header { height: 23px; display: flex; justify-content: flex-end; align-items: center; }
.dock header button { width: 17px; height: 17px; border: 1px solid #6c7c92; display: grid; place-items: center; }
.dock header svg { width: 10px; height: 10px; }
.dock-body { border: 1px solid #39434f; background: #f0f0f0; }
.pads { display: grid; grid-template-columns: repeat(4, 1fr); gap: 1px; padding: 5px; }
.pads button { height: 21px; border: 1px solid #fff; border-right-color: #999; border-bottom-color: #999; }
.dacs { display: flex; justify-content: flex-end; gap: 7px; padding: 5px 7px 9px; }
.tracks { flex: 1; display: flex; flex-direction: column; justify-content: space-between; padding: 3px 0 20px; }
.tracks i { height: 3px; border: 1px solid #bbb; }
.tracks i + i { height: 10px; }
.dac-list { display: flex; flex-direction: column; gap: 2px; }
.dac { width: 79px; display: flex; flex-direction: column; }
.dac label { height: 18px; line-height: 20px; }
.dac input { width: 79px; height: 19px; border: 1px solid #e4e4e4; border-top-color: #999; border-left-color: #999; background: #fff; text-align: right; padding-right: 1px; }
.dac input:disabled { background: #f0f0f0; color: #888; }

/* scroll bar and status bar */
.hscroll { height: 19px; flex: none; display: flex; align-items: center; background: #ececec; border-top: 1px solid #fff; border-bottom: 1px solid #fff; padding: 0 2px; }
.hscroll button { width: 17px; flex: none; display: grid; place-items: center; }
.hscroll svg { width: 8px; height: 8px; }
.thumb { flex: 1; margin-left: 9px; height: 17px; border: 1px solid #959595; border-radius: 2px; background: linear-gradient(#f4f4f4 45%, #dcdcde 50%, #bfbfc4); display: flex; justify-content: center; align-items: center; gap: 1px; }
.thumb i { width: 2px; height: 8px; background: #777; }
.status { height: 21px; flex: none; display: flex; align-items: center; gap: 3px; padding: 2px 0 1px; }
.ready { flex: 1; padding-left: 2px; }
.cell { height: 17px; border: 1px solid #fff; border-top-color: #a0a0a0; border-left-color: #a0a0a0; text-align: center; }
.c-long { width: 356px; }
.c-small { width: 28px; }
.c-num { width: 33px; }

/* taskbar */
.taskbar { height: 39px; flex: none; display: flex; gap: 4px; background: linear-gradient(#3b4754, #141b24 4px, #10161e); color: #fff; border-top: 1px solid #10161c; }
.orb { width: 56px; display: grid; place-items: center; }
.orb svg { width: 39px; height: 38px; }
.task { width: 126px; display: flex; align-items: center; gap: 6px; padding: 0 4px 0 8px; border: 1px solid #85898e; border-radius: 3px; background: linear-gradient(170deg, #94989d, #54595f 35%, #25292e 60%, #2b2f34); text-align: left; overflow: hidden; }
.task .ico { width: 30px; height: 32px; flex: none; }
.task .small { height: 26px; }
.task .tall { height: 37px; }
.task.active { background: linear-gradient(170deg, #d0d1d3, #a2a4a6 45%, #77797c 60%, #8c8e90); }
.group { display: flex; border: 1px solid #85898e; border-radius: 3px; overflow: hidden; }
.group .task { width: 128px; border: 0; border-radius: 0; }
.pin { width: 54px; display: grid; place-items: center; }
.pin svg { width: 34px; height: 38px; }
.tray { margin-left: auto; display: flex; align-items: center; gap: 8px; }
.tray > svg { width: 16px; height: 16px; }
.lang { width: 24px; margin-bottom: 4px; }
.time { width: 74px; display: flex; flex-direction: column; align-items: center; line-height: 17px; }
.desk { width: 14px; align-self: stretch; margin-left: -4px; border: 1px solid #6c7681; background: linear-gradient(135deg, #56616c, #141a22 50%); }

/* floating window */
.python {
  position: absolute;
  left: 828px;
  top: 90px;
  width: 940px;
  padding: 0 6px 6px;
  border: 1px solid #1e2a36;
  border-radius: 7px;
  background: linear-gradient(90deg, #c4d4e4, transparent 110px) 0 0 / 100% 28px no-repeat,
    linear-gradient(#b1cdec, #8199b4 16px, #8aa2bc 28px) 0 0 / 100% 28px no-repeat,
    linear-gradient(#c6d6e6 150px, #87a0bb 155px);
  box-shadow: inset 0 0 0 1px #dbe8f5, 0 0 7px 2px rgba(0, 0, 0, .65), 5px 8px 16px rgba(0, 0, 0, .6);
}
.py-title { height: 28px; display: flex; align-items: center; gap: 5px; padding-left: 1px; }
.py-title .i16 { width: 15px; height: 15px; }
.py-title > span { flex: 1; }
.light { height: 20px; margin-right: 0; border-color: #445160; box-shadow: inset 0 0 0 1px #cdd9e6; }
.light button { border-color: #445160; background: linear-gradient(#d6e0ea, #a4b4c5 50%, #b5c4d3); }
.light .close { background: linear-gradient(#e3a498, #c9432c 50%, #b8301c 60%, #d0684a); }
.py-body { border: 1px solid #445566; background: #f0f0f0; display: flex; gap: 15px; padding: 11px; }
.plot { width: 640px; height: 473px; flex: none; background: #000; display: flex; justify-content: space-between; align-items: flex-start; }
.plot canvas { margin: 29px 0 0 51px; }
.ticks { fill: #999; text-anchor: end; font: 11px "Open Sans", sans-serif; }
.scan-form { flex: 1; display: grid; grid-template-columns: 133px 1fr; grid-template-rows: repeat(15, 1fr); column-gap: 7px; align-items: center; padding: 42px 0 43px; font: 11px/16px Roboto, "Open Sans", sans-serif; }
.scan-form > * { grid-column: 1; }
.scan-form > input { width: 133px; height: 20px; padding: 1px 4px; background: #fff; border: 1px solid #e3e9ef; border-top-color: #abadb3; border-radius: 1px; }
.scan-form .check { grid-column: 2; grid-row: 12; display: flex; align-items: center; gap: 4px; }
.scan-form .total { grid-row: 13; }
.scan-form .total-value { grid-row: 14; }
.scan-form .go { grid-row: 15; }
.check input { appearance: none; width: 13px; height: 13px; border: 1px solid #8e8f8f; background: linear-gradient(135deg, #cbcfd5, #f6f6f6); box-shadow: inset 0 0 0 2px #f4f4f4; }
.live { height: 22px; border: 1px solid #707070; border-radius: 3px; background: linear-gradient(#f2f2f2, #ebebeb 50%, #dddddd 50%, #cfcfcf); box-shadow: inset 0 0 0 1px #fafafa; }
.go { height: 24px; background: #808080; border: 1px solid #a8a8a8; border-right: 2px solid #404040; border-bottom: 2px solid #404040; }
```

FILE: scan.js
```js
// Seeded generator, so that the simulated scans look the same on every load.
let seed = 12345;
function rnd() {
  seed = (seed * 1664525 + 1013904223) >>> 0;
  return seed / 4294967296;
}
function noise() { return rnd() + rnd() + rnd() - 1.5; }

const rainbow = [[0, 0, 0], [0, 0, 255], [0, 255, 255], [0, 255, 0], [255, 255, 0], [255, 0, 0], [255, 255, 255]];
const thermal = [[0, 0, 0], [185, 0, 0], [255, 220, 0], [255, 255, 255]];

function colour(map, v) {
  const p = Math.max(0, Math.min(0.9999, v)) * (map.length - 1);
  const i = Math.floor(p), f = p - i;
  return map[i].map((c, k) => c + (map[i + 1][k] - c) * f);
}

function paint(id, map, value) {
  const canvas = document.getElementById(id);
  const ctx = canvas.getContext('2d');
  const w = canvas.width, h = canvas.height;
  const img = ctx.createImageData(w, h);
  for (let y = 0; y < h; y++) {
    for (let x = 0; x < w; x++) {
      const c = colour(map, value(x, y, w, h));
      const o = (y * w + x) * 4;
      img.data[o] = c[0]; img.data[o + 1] = c[1]; img.data[o + 2] = c[2]; img.data[o + 3] = 255;
    }
  }
  ctx.putImageData(img, 0, 0);
}

// Beads of the sample: x, y, spread, brightness, on a field 1062 units wide.
const beads = [
  [140,120,27,.82],[185,118,22,.22],[20,245,24,.5],[58,285,24,.45],[90,330,22,.3],[685,2,24,.58],[845,38,24,.6],[1005,18,32,.72],
  [290,5,24,.22],[590,65,22,.2],[636,42,22,.28],[585,128,22,.45],[703,112,22,.36],[525,148,20,.2],[455,160,24,.3],[475,215,20,.13],
  [345,192,22,.33],[275,185,22,.15],[200,212,22,.27],[235,258,26,.17],[285,265,22,.13],[430,312,28,.26],[375,315,25,.12],[585,325,24,.48],
  [555,288,24,.17],[610,290,22,.18],[580,380,22,.33],[690,345,22,.27],[765,205,20,.18],[1020,178,22,.22],[958,260,24,.38],[1015,240,22,.2],
  [1035,305,22,.22],[1062,315,20,.18],[818,315,24,.36],[880,335,22,.28],[800,385,22,.28],[775,435,22,.2],[725,420,22,.12],[640,465,22,.3],
  [743,500,25,.42],[850,525,24,.25],[905,540,22,.13],[1000,540,24,.15],[990,460,22,.28],[995,400,22,.2],[915,430,20,.12],[1058,440,18,.3],
  [475,435,24,.32],[450,482,26,.34],[460,400,22,.13],[310,465,26,.3],[245,440,22,.22],[235,500,20,.15],[105,478,28,.36],[150,510,22,.26],
  [50,465,22,.22],[140,445,22,.2],[70,410,22,.12],[385,440,20,.16],[390,595,22,.3],[495,615,20,.16],[155,605,22,.2],[215,590,22,.15],
  [90,580,22,.08],[300,570,24,.08],[18,688,28,.6],[65,685,22,.22],[20,765,24,.4],[155,735,24,.3],[170,660,26,.22],[120,675,22,.12],
  [225,670,22,.2],[262,705,22,.22],[363,708,28,.64],[430,698,24,.36],[495,700,30,.1],[470,780,22,.24],[690,680,26,.34],[728,712,24,.26],
  [710,635,20,.2],[808,727,22,.26],[850,670,24,.2],[740,780,22,.16],[800,822,20,.18],[660,835,24,.26],[870,865,26,.22],[870,915,24,.12],
  [1000,920,24,.24],[990,805,30,.16],[885,740,22,.1],[520,825,24,.2],[555,870,22,.18],[55,835,28,.24],[115,870,22,.26],[165,830,22,.22],
  [245,810,22,.22],[240,870,22,.27],[55,905,22,.18],[370,885,28,.4],[415,850,24,.3],[325,885,26,.18],[205,975,34,.96],[225,980,30,.08],
  [290,975,24,.28],[345,1015,24,.38],[432,980,22,.34],[435,1035,22,.36],[430,940,18,.12],[500,955,24,.2],[110,1010,22,.25],[55,1045,28,.38],
  [245,1060,24,.5],[320,790,26,.15],[780,950,35,.14],[860,970,28,.1],[600,960,24,.08],[990,1030,28,.2],[720,1050,24,.08],[220,50,28,.13],
  [130,20,24,.14],[35,95,30,.2],[510,35,22,.18],[955,105,24,.17],[930,75,24,.12],[880,190,24,.08],[650,550,30,.1],[840,570,30,.05],
  [970,600,25,.1],[1050,90,20,.12]
];

function beadField(u, v) {
  let s = 0;
  for (const [bx, by, r, a] of beads) {
    const dx = u - bx, dy = v - by, d = dx * dx + dy * dy;
    if (d < r * r * 10) s += a * Math.exp(-d / (2 * r * r));
  }
  return s;
}

// Coarse scan: speckle with a slow fall-off towards the lower right.
const cw = 354, ch = 352;
const raw = Array.from({ length: (cw + 4) * (ch + 4) }, noise);
const hot = [[177, 16], [186, 43], [127, 77], [171, 192], [93, 219]];
paint('scan-coarse', rainbow, (x, y, w, h) => {
  let s = 0;
  for (let j = 0; j < 4; j++) for (let i = 0; i < 4; i++) {
    const k = (i === 0 || i === 3 ? .6 : 1) * (j === 0 || j === 3 ? .6 : 1);
    s += raw[(y + j) * (cw + 4) + x + i] * k;
  }
  const wave = .015 * Math.sin(x / 27 + y / 40) + .015 * Math.sin(y / 19 - x / 33);
  const mean = .275 - .08 * y / h - .015 * x / w + wave;
  const hole = .14 * Math.exp(-((x - 320) ** 2 + (y - 202) ** 2) / 250) + .06 * Math.exp(-((x - 60) ** 2 / 2000 + (y - 285) ** 2 / 200));
  let v = mean + s * mean * .25 - hole + noise() * .02;
  for (const [hx, hy] of hot) v += .55 * Math.exp(-((x - hx) ** 2 + (y - hy) ** 2) / 3);
  return Math.max(.03, v);
});

paint('scan-fine', rainbow, (x, y, w, h) => {
  const s = beadField(x / w * 1062, y / h * 1062) * .9;
  return s + .008 + noise() * (.015 + .075 * Math.sqrt(Math.max(0, s)));
});

// Live scan: the same beads, with line jitter, smeared where the stage turns round.
const bands = [[.09, .03, .15], [.125, .02, .1], [.243, .02, .42], [.3, .022, .17], [.41, .02, .12], [.51, .02, .06], [.745, .02, .035], [.955, .02, .06]];
const jitter = Array.from({ length: 415 }, (_, y) => (y % 3 ? 3 : -8) + noise() * 8);
paint('scan-live', thermal, (x, y, w, h) => {
  const fx = x / w, fy = y / h;
  const u = ((fx + jitter[y] / w * .6 - .17) / .941 + .132) * 1062;
  const v = ((fy - .053) / .965 + .037) * 1062;
  let s = beadField(u, v) * 1.25 + .08 * (1 - fx) ** 2 + .01;
  const edge = 1 / (1 + Math.exp((fx - .855) * 90));
  let band = 0;
  for (const [c, r, a] of bands) band += a * Math.exp(-((fy - c) ** 2) / (2 * r * r * .6));
  s = s * edge + band * 1.1 * (1 - edge);
  if (y === 95) s += fx < .05 || (fx > .78 && fx < .88) ? .5 : .14;
  if (y === 306) s += .06;
  return s + noise() * (.008 + .06 * Math.sqrt(Math.max(0, s)));
});

// Intensity histogram, drawn sideways beside the colour bar.
const knots = [[100, 76], [200, 75], [270, 73], [310, 67], [340, 61], [360, 53], [375, 45], [390, 41], [404, 34], [412, 31]];
const spikes = { 309: 55, 324: 52, 339: 43, 353: 31, 359: 60, 371: 31, 385: 31, 396: 34 };
let path = 'M76 463V100';
for (let i = 0, y = 100; y <= 412; y++) {
  while (i < knots.length - 2 && y > knots[i + 1][0]) i++;
  const [y0, x0] = knots[i], [y1, x1] = knots[i + 1];
  const base = x0 + (x1 - x0) * (y - y0) / (y1 - y0);
  const x = spikes[y] || base + noise() * Math.min(4, 1 + (y - 100) / 70);
  path += 'L' + Math.max(31, Math.min(76, x)).toFixed(1) + ' ' + y;
}
document.getElementById('hist-fill').setAttribute('d', path + 'L31 463Z');
```
